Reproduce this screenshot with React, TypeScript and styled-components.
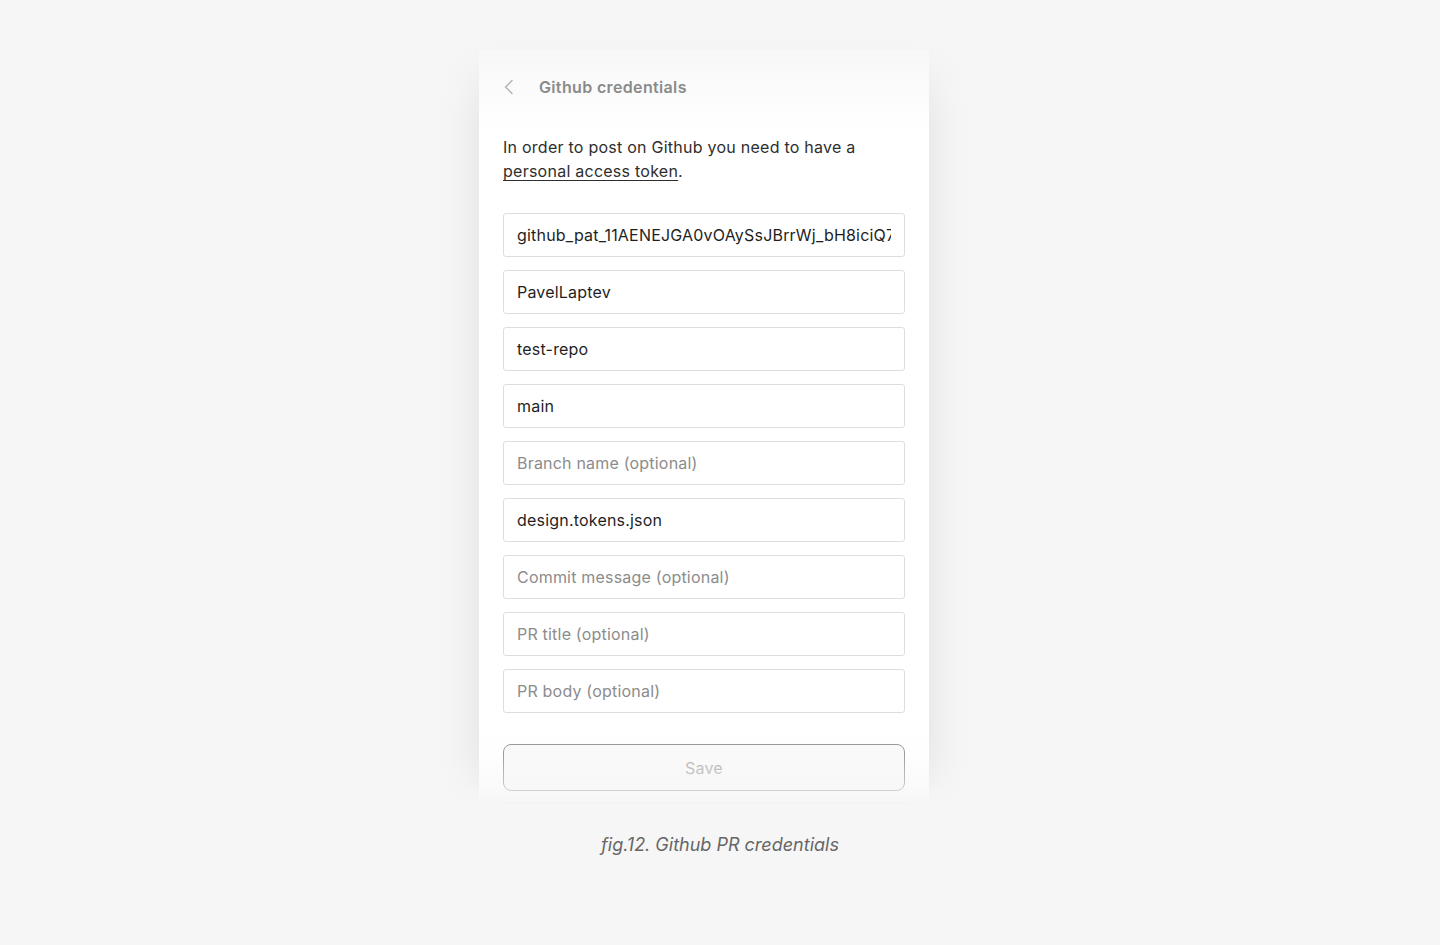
import React from "react";
import styled, { createGlobalStyle } from "styled-components";

const Global = createGlobalStyle`
  html, body { margin: 0; padding: 0; background: #f6f6f6; }
  body { font-family: Inter, "Noto Sans", sans-serif; -webkit-font-smoothing: antialiased; }
  * { box-sizing: border-box; }
`;

const Page = styled.main`
  min-height: 945px;
  display: flex;
  flex-direction: column;
  align-items: center;
  padding-top: 50px;
`;

const Figure = styled.div`
  position: relative;
  width: 450px;
  margin-right: 32px;
  &::before, &::after {
    content: "";
    position: absolute;
    left: -70px;
    right: -70px;
    pointer-events: none;
    z-index: 2;
  }
  &::before {
    top: -50px;
    height: 130px;
    background: linear-gradient(to bottom, rgba(246,246,246,1) 0%, rgba(246,246,246,1) 30%, rgba(246,246,246,0.8) 42%, rgba(246,246,246,0) 100%);
  }
  &::after {
    bottom: -50px;
    height: 130px;
    background: linear-gradient(to bottom, rgba(246,246,246,0) 0%, rgba(246,246,246,0.12) 25%, rgba(246,246,246,0.55) 50%, rgba(246,246,246,1) 66%, rgba(246,246,246,1) 100%);
  }
`;

const Card = styled.section`
  background: #fff;
  box-shadow: 0 0 40px rgba(0, 0, 0, 0.1);
  padding: 0 24px 10px;
`;

const Header = styled.header`
  position: relative;
  z-index: 3;
  display: flex;
  align-items: flex-start;
  gap: 20px;
  padding-top: 26px;
  height: 85px;
`;

const Back = styled.span`
  display: flex;
  width: 16px;
  height: 22px;
  align-items: center;
  justify-content: flex-start;
  color: #b3b3b3;
`;

const Title = styled.h1`
  margin: 0;
  font-size: 16px;
  line-height: 22px;
  font-weight: 600;
  letter-spacing: 0.35px;
  color: #8a8a8a;
`;

const Intro = styled.p`
  margin: 0 0 30px;
  font-size: 16px;
  line-height: 24px;
  color: #2e2e2e;
  letter-spacing: 0.25px;
  a { color: inherit; text-decoration: underline; text-underline-offset: 3px; }
`;

const Fields = styled.div`
  display: flex;
  flex-direction: column;
  gap: 13px;
`;

const Field = styled.input`
  width: 100%;
  height: 44px;
  border: 1px solid #dedede;
  border-radius: 3px;
  padding: 0 13px;
  font-family: Inter, "Noto Sans", sans-serif;
  font-size: 16px;
  letter-spacing: 0.2px;
  color: #1f1f1f;
  background: #fff;
  outline: none;
  &::placeholder { color: #8c8c8c; }
`;

const SaveButton = styled.button`
  position: relative;
  z-index: 1;
  margin-top: 31px;
  width: 100%;
  height: 47px;
  border: 1px solid #8f8f8f;
  border-radius: 8px;
  background: #fafafa;
  font-family: Inter, "Noto Sans", sans-serif;
  font-size: 16px;
  letter-spacing: 0.2px;
  color: #aaaaaa;
`;

const Caption = styled.p`
  margin: 32px 0 0;
  font-size: 18px;
  line-height: 24px;
  font-style: italic;
  color: #666;
  position: relative;
  z-index: 3;
`;

const fields: { value?: string; placeholder?: string }[] = [
  { value: "github_pat_11AENEJGA0vOAySsJBrrWj_bH8iciQ7xK2mLp" },
  { value: "PavelLaptev" },
  { value: "test-repo" },
  { value: "main" },
  { placeholder: "Branch name (optional)" },
  { value: "design.tokens.json" },
  { placeholder: "Commit message (optional)" },
  { placeholder: "PR title (optional)" },
  { placeholder: "PR body (optional)" },
];

export default function App() {
  return (
    <>
      <Global />
      <Page>
        <Figure>
          <Card>
            <Header>
              <Back>
                <svg width="10" height="16" viewBox="0 0 10 16" fill="none">
                  <path d="M9 1.5L2.5 8 9 14.5" stroke="currentColor" strokeWidth="1.4" strokeLinecap="round" strokeLinejoin="round" />
                </svg>
              </Back>
              <Title>Github credentials</Title>
            </Header>
            <Intro>
              In order to post on Github you need to have a{" "}
              <a href="#">personal access token</a>.
            </Intro>
            <Fields>
              {fields.map((f, i) => (
                <Field key={i} defaultValue={f.value} placeholder={f.placeholder} readOnly />
              ))}
            </Fields>
            <SaveButton type="button">Save</SaveButton>
          </Card>
        </Figure>
        <Caption>fig.12. Github PR credentials</Caption>
      </Page>
    </>
  );
}
